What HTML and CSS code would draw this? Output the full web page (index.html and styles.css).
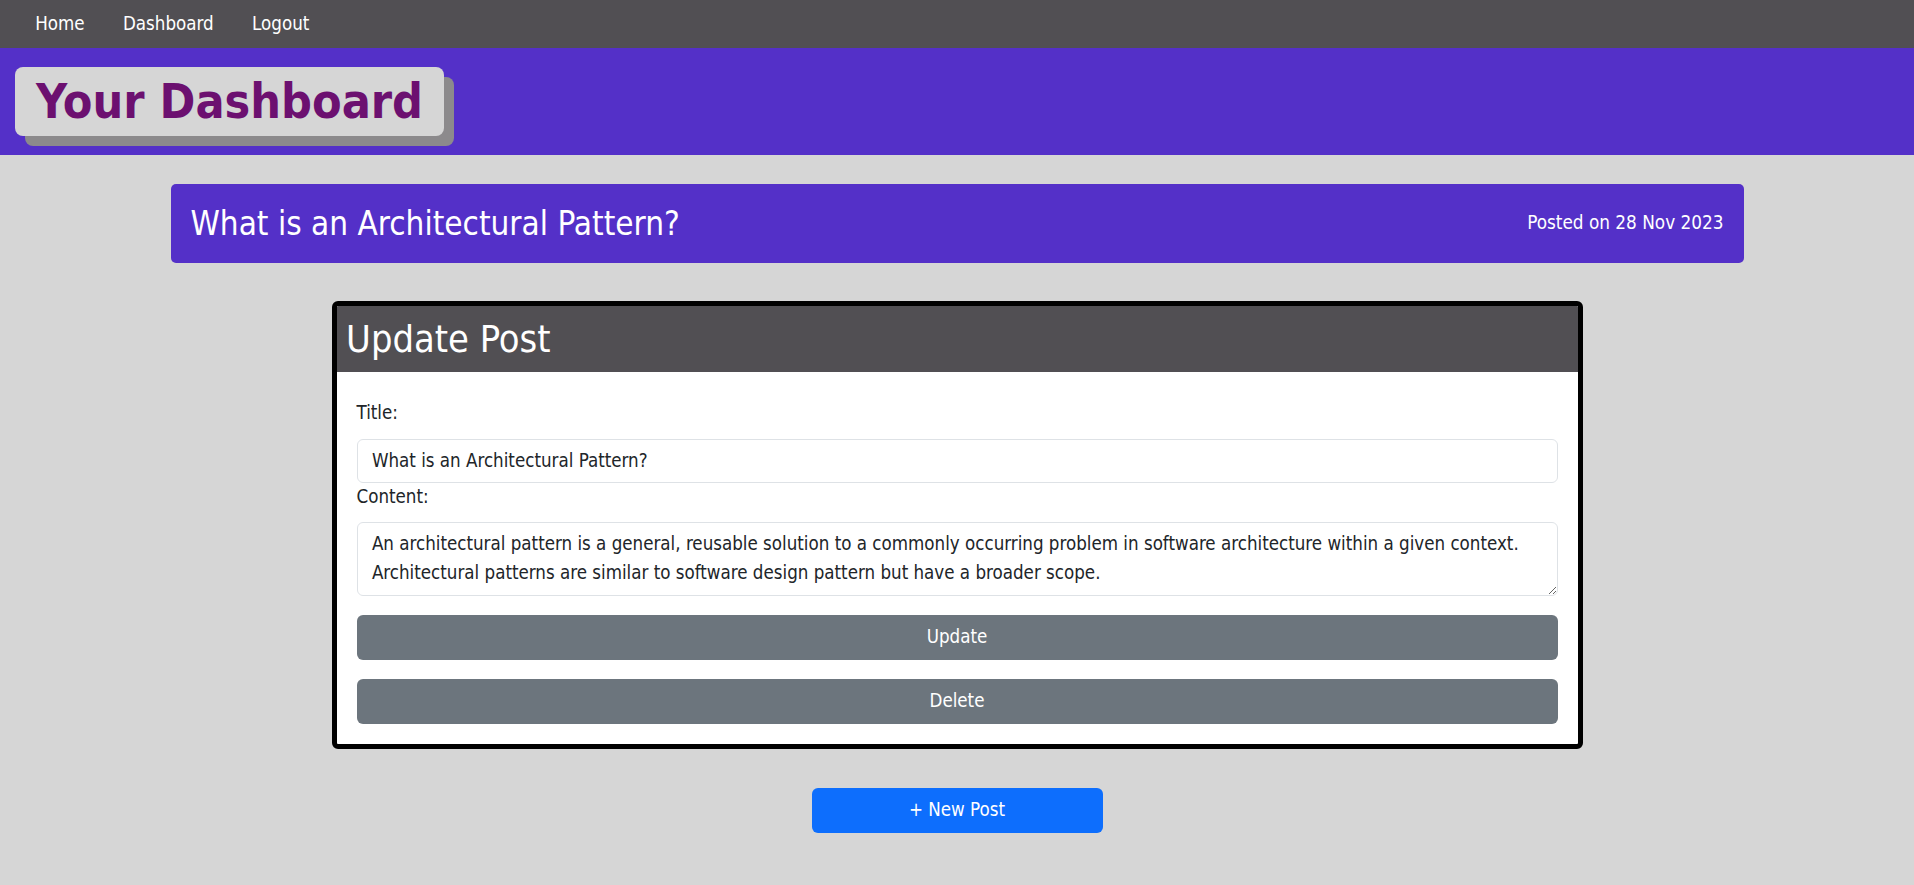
FILE: index.html
```html
<!DOCTYPE html>
<html lang="en">
<head>
<meta charset="utf-8">
<title>Your Dashboard</title>
<link rel="stylesheet" href="styles.css">
</head>
<body>
<nav class="topnav">
  <a class="nav-link" href="#">Home</a>
  <a class="nav-link" href="#">Dashboard</a>
  <a class="nav-link" href="#">Logout</a>
</nav>
<header class="banner">
  <h1 class="brand">Your Dashboard</h1>
</header>
<main class="main">
  <section class="post-bar">
    <h2 class="post-title">What is an Architectural Pattern?</h2>
    <span class="post-date">Posted on 28 Nov 2023</span>
  </section>
  <section class="card">
    <div class="card-header">
      <h2 class="card-title">Update Post</h2>
    </div>
    <form class="card-body">
      <label class="field-label" for="title">Title:</label>
      <input class="field-input" id="title" type="text" value="What is an Architectural Pattern?">
      <label class="field-label field-label-tight" for="content">Content:</label>
      <textarea class="field-area" id="content">An architectural pattern is a general, reusable solution to a commonly occurring problem in software architecture within a given context.
Architectural patterns are similar to software design pattern but have a broader scope.</textarea>
      <button class="btn btn-secondary btn-first" type="button">Update</button>
      <button class="btn btn-secondary" type="button">Delete</button>
    </form>
  </section>
  <button class="btn btn-primary new-post" type="button">+ New Post</button>
</main>
</body>
</html>
```

FILE: styles.css
```css
* {
  box-sizing: border-box;
}

body {
  margin: 0;
  background: #d6d6d6;
  font-family: "DejaVu Sans Condensed", "DejaVu Sans", sans-serif;
  font-size: 18.6px;
  line-height: 28.8px;
  color: #212529;
}

.topnav {
  display: flex;
  align-items: center;
  height: 48px;
  padding-left: 16px;
  background: #514f53;
}

.nav-link {
  padding: 0 19.2px;
  color: #ffffff;
  text-decoration: none;
  font-size: 18.6px;
  line-height: 28.8px;
}

.banner {
  height: 107px;
  padding: 19px 15px;
  background: #5430c8;
}

.brand {
  display: inline-block;
  margin: 0;
  height: 69px;
  padding: 0 21px;
  background: #d6d6d6;
  border-radius: 8px;
  box-shadow: 10px 10px 0 #8c8a8c;
  color: #6c1070;
  font-size: 48px;
  font-weight: bold;
  line-height: 69px;
}

.main {
  display: flex;
  flex-direction: column;
  align-items: center;
  padding-bottom: 40px;
}

.post-bar {
  display: flex;
  align-items: center;
  justify-content: space-between;
  width: 1573px;
  height: 79px;
  margin-top: 29px;
  padding: 0 20px;
  background: #5430c8;
  border-radius: 5px;
  color: #ffffff;
}

.post-title {
  margin: 0;
  font-size: 33px;
  font-weight: normal;
  line-height: 43px;
}

.post-date {
  font-size: 18.8px;
}

.card {
  width: 1251px;
  margin-top: 38px;
  background: #ffffff;
  border: 5px solid #000000;
  border-radius: 6px;
  overflow: hidden;
}

.card-header {
  display: flex;
  align-items: center;
  height: 66px;
  padding: 0 9.6px;
  background: #514f53;
  color: #ffffff;
}

.card-title {
  margin: 0;
  font-size: 37.7px;
  font-weight: normal;
  line-height: 46px;
}

.card-body {
  display: flex;
  flex-direction: column;
  padding: 27px 20px 20px;
}

.field-label {
  display: block;
  margin-bottom: 11px;
}

.field-label-tight {
  margin-bottom: 10px;
}

.field-input,
.field-area {
  width: 100%;
  border: 1px solid #dee2e6;
  border-radius: 6px;
  background: #ffffff;
  color: #212529;
  font-family: inherit;
  font-size: 18.6px;
  line-height: 28.8px;
}

.field-input {
  height: 44px;
  padding: 0 14.4px;
}

.field-area {
  height: 74px;
  padding: 7.2px 14.4px;
  resize: vertical;
  overflow: hidden;
}

.btn {
  display: block;
  width: 100%;
  height: 45px;
  border: none;
  border-radius: 6px;
  color: #ffffff;
  font-family: inherit;
  font-size: 18.6px;
  line-height: 28.8px;
}

.btn-secondary {
  margin-top: 19px;
  background: #6c757d;
}

.btn-primary {
  background: #0d6efd;
}

.new-post {
  width: 291px;
  margin-top: 39px;
}
```
